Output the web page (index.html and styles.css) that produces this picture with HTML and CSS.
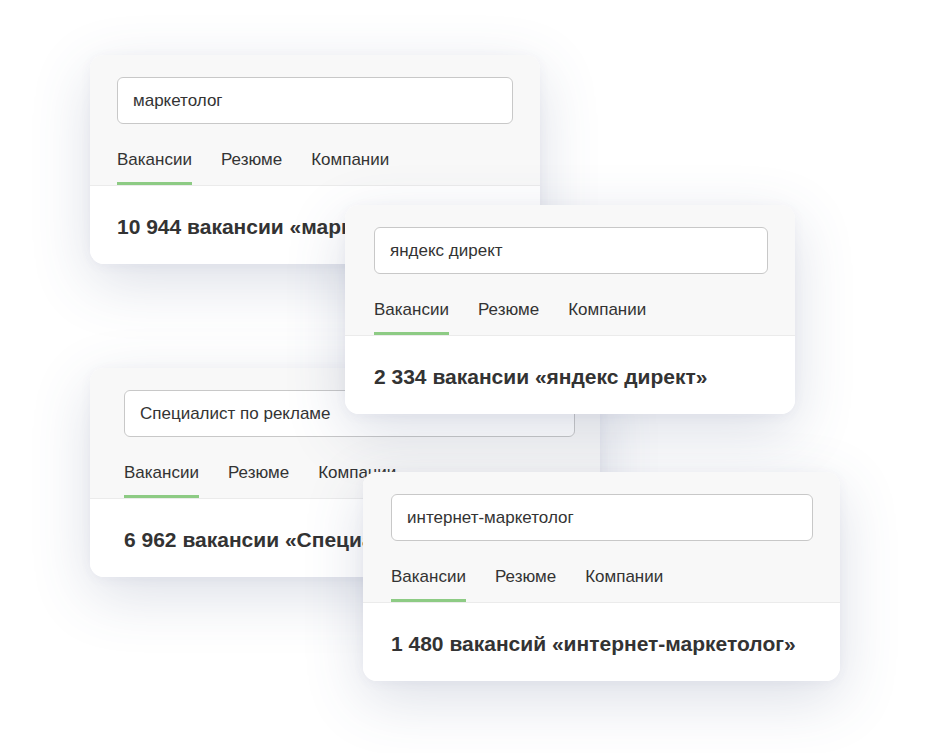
FILE: index.html
```html
<!DOCTYPE html>
<html lang="ru">
<head>
<meta charset="utf-8">
<title>Поиск вакансий</title>
<link rel="stylesheet" href="styles.css">
</head>
<body>
<div class="canvas">
  <div class="card card-1">
    <div class="card-head">
      <div class="search">маркетолог</div>
      <div class="tabs">
        <span class="tab active">Вакансии</span>
        <span class="tab">Резюме</span>
        <span class="tab">Компании</span>
      </div>
    </div>
    <div class="card-body">10 944 вакансии «маркетолог»</div>
  </div>

  <div class="card card-3">
    <div class="card-head">
      <div class="search">Специалист по рекламе</div>
      <div class="tabs">
        <span class="tab active">Вакансии</span>
        <span class="tab">Резюме</span>
        <span class="tab">Компании</span>
      </div>
    </div>
    <div class="card-body">6 962 вакансии «Специалист по рекламе»</div>
  </div>

  <div class="card card-2">
    <div class="card-head">
      <div class="search">яндекс директ</div>
      <div class="tabs">
        <span class="tab active">Вакансии</span>
        <span class="tab">Резюме</span>
        <span class="tab">Компании</span>
      </div>
    </div>
    <div class="card-body">2 334 вакансии «яндекс директ»</div>
  </div>

  <div class="card card-4">
    <div class="card-head">
      <div class="search">интернет-маркетолог</div>
      <div class="tabs">
        <span class="tab active">Вакансии</span>
        <span class="tab">Резюме</span>
        <span class="tab">Компании</span>
      </div>
    </div>
    <div class="card-body">1 480 вакансий «интернет-маркетолог»</div>
  </div>
</div>
</body>
</html>
```

FILE: styles.css
```css
* { box-sizing: border-box; }

html, body {
  margin: 0;
  padding: 0;
  background: #ffffff;
}

body {
  font-family: "Liberation Sans", Arial, sans-serif;
  color: #333333;
}

.canvas {
  position: relative;
  width: 941px;
  height: 753px;
  overflow: hidden;
}

.card {
  position: absolute;
  display: flex;
  flex-direction: column;
  border-radius: 14px;
  overflow: hidden;
  background: #ffffff;
  box-shadow: 0 18px 60px rgba(70, 85, 130, 0.19), 0 2px 12px rgba(70, 85, 130, 0.05);
}

.card-1 { left: 90px; top: 55px; width: 450px; }
.card-2 { left: 345px; top: 205px; width: 450px; }
.card-3 { left: 90px; top: 368px; width: 510px; border-radius: 14px 0 0 14px; }
.card-4 { left: 363px; top: 472px; width: 477px; }

.card-head {
  background: #f8f8f8;
  padding: 22px 27px 0 27px;
  border-bottom: 1px solid #ebebeb;
  display: flex;
  flex-direction: column;
}

.card-2 .card-head { padding-left: 29px; }
.card-3 .card-head { padding: 22px 25px 0 34px; }
.card-4 .card-head { padding-left: 28px; }

.search {
  height: 47px;
  background: #ffffff;
  border: 1px solid #c8c8c8;
  border-radius: 6px;
  padding: 0 15px;
  display: flex;
  align-items: center;
  font-size: 17px;
  color: #333333;
}

.tabs {
  display: flex;
  gap: 29px;
}

.tab {
  padding-top: 26px;
  padding-bottom: 12px;
  line-height: 20px;
  font-size: 17px;
  color: #333333;
  border-bottom: 3px solid transparent;
}

.tab.active {
  border-bottom-color: #8dcb84;
}

.card-body {
  background: #ffffff;
  height: 78px;
  padding: 28px 27px 0 27px;
  font-size: 21px;
  line-height: 25px;
  font-weight: 700;
  color: #333333;
  white-space: nowrap;
}

.card-2 .card-body { padding-left: 29px; }
.card-3 .card-body { padding-left: 34px; }
.card-4 .card-body { padding-left: 28px; }
```
